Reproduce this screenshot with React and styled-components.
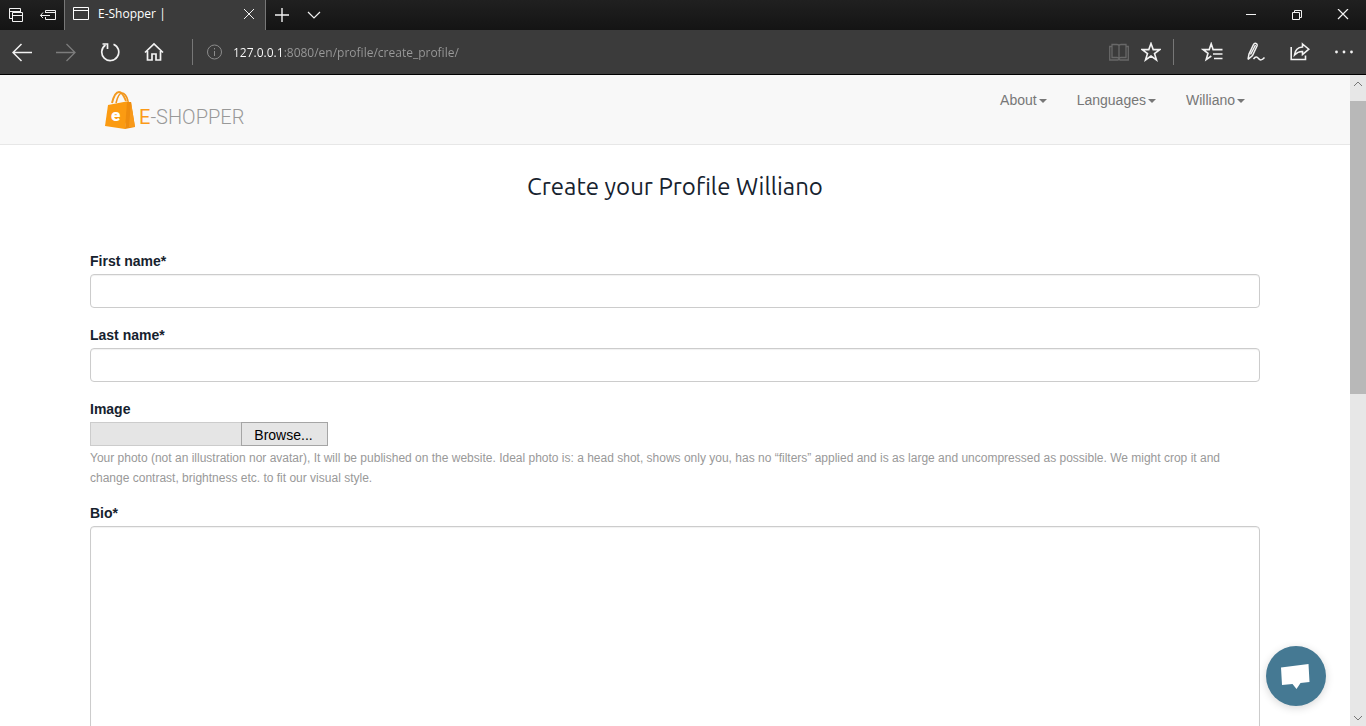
import React, { useRef, useState } from "react";
import styled, { createGlobalStyle } from "styled-components";

const GlobalStyle = createGlobalStyle`
  *, *::before, *::after { box-sizing: border-box; }
  body {
    margin: 0;
    background: #fff;
    color: #16222e;
    font: 14px/20px "Liberation Sans", Arial, sans-serif;
  }
`;

const Window = styled.div`
  display: flex;
  flex-direction: column;
  height: 100vh;
  overflow: hidden;
`;

const TabStrip = styled.div`
  display: flex;
  flex: 0 0 30px;
  background: linear-gradient(#202020, #141414);
  color: #fff;
  font-family: "Open Sans", "Noto Sans", sans-serif;
`;

const IconButton = styled.button`
  display: flex;
  align-items: center;
  justify-content: center;
  flex: none;
  width: ${(p) => p.$width || 32}px;
  padding: 0;
  border: 0;
  background: none;
  color: ${(p) => p.$color || "#f2f2f2"};
  svg {
    display: block;
    fill: none;
    stroke: currentColor;
  }
`;

const Tab = styled.div`
  display: flex;
  align-items: center;
  flex: 0 0 202px;
  padding: 0 0 2px 8px;
  border: solid #777;
  border-width: 0 1px;
  background: #3b3b3b;
  svg { flex: none; }
`;

const TabTitle = styled.span`
  flex: 1;
  padding-left: 8px;
  font-size: 12px;
  white-space: nowrap;
`;

const Spacer = styled.div`
  flex: 1;
`;

const Toolbar = styled.div`
  display: flex;
  flex: 0 0 45px;
  background: #3b3b3b;
  border-bottom: 1px solid #000;
`;

const Divider = styled.div`
  flex: 0 0 1px;
  height: 26px;
  margin: 9px ${(p) => p.$right || 0}px 0 ${(p) => p.$left || 0}px;
  background: #777;
`;

const Address = styled.input`
  flex: 1;
  min-width: 0;
  padding: 0 0 0 2px;
  border: 0;
  outline: 0;
  background: linear-gradient(90deg, #fff 53px, #9a9a9a 53px);
  background-clip: text;
  -webkit-background-clip: text;
  color: transparent;
  caret-color: #fff;
  font: 12px "Open Sans", "Noto Sans", sans-serif;
`;

const Viewport = styled.div`
  display: flex;
  flex: 1;
  min-height: 0;
`;

const Page = styled.div`
  flex: 1;
  min-width: 0;
  overflow-y: auto;
  scrollbar-width: none;
`;

const SiteHeader = styled.header`
  background: #f8f8f8;
  border-bottom: 1px solid #e7e7e7;
`;

const Container = styled.div`
  max-width: 1170px;
  margin: 0 auto;
`;

const HeaderRow = styled(Container)`
  display: flex;
  justify-content: space-between;
  min-height: 69px;
  padding: 16px 15px 0;
`;

const Logo = styled.a`
  display: flex;
  align-items: flex-start;
  color: #b3b3b3;
  text-decoration: none;
`;

const LogoText = styled.span`
  padding: 13px 0 0 3px;
  font: 300 20px/26px "Roboto", sans-serif;
  color: #999;
  b {
    font-weight: 400;
    color: #fb9a18;
  }
`;

const Nav = styled.nav`
  display: flex;
  align-items: flex-start;
  gap: 30px;
`;

const NavButton = styled.button`
  display: flex;
  align-items: center;
  padding: 0;
  border: 0;
  background: none;
  color: #777;
  font: 14px/18px "Liberation Sans", Arial, sans-serif;
  &::after {
    content: "";
    margin: 2px 0 0 2px;
    border: solid transparent;
    border-width: 4px 4px 0;
    border-top-color: #777;
  }
`;

const Main = styled(Container).attrs({ as: "main" })`
  padding: 30px 0 40px;
`;

const Title = styled.h1`
  margin: 0 0 52px;
  font: 400 24px/24px "Ubuntu", "Noto Sans", sans-serif;
  text-align: center;
`;

const Field = styled.div`
  margin-bottom: ${(p) => p.$gap || 17}px;
`;

const Label = styled.label`
  display: block;
  margin-bottom: 3px;
  font-size: 14px;
  font-weight: 700;
`;

const controlStyle = `
  display: block;
  width: 100%;
  padding: 6px 12px;
  border: 1px solid #ccc;
  border-radius: 4px;
  background: #fff;
  color: #555;
  font: inherit;
  box-shadow: inset 0 1px 1px rgba(0, 0, 0, 0.06);
`;

const TextInput = styled.input`
  ${controlStyle}
  height: 34px;
`;

const TextArea = styled.textarea`
  ${controlStyle}
  height: 320px;
  resize: vertical;
`;

const FilePicker = styled.div`
  display: flex;
  width: 238px;
  height: 24px;
`;

const HiddenFile = styled.input`
  position: absolute;
  width: 1px;
  height: 1px;
  opacity: 0;
`;

const FileName = styled.span`
  flex: 1;
  overflow: hidden;
  border: 1px solid #ccc;
  border-right: 0;
  background: #e5e5e5;
  font-size: 13px;
  white-space: nowrap;
`;

const Browse = styled.button`
  width: 87px;
  padding: 2px 2px 0 0;
  border: 1px solid #a5a5a5;
  background: #e5e5e5;
  color: #000;
  font: 14px/20px "Liberation Sans", Arial, sans-serif;
`;

const Help = styled.p`
  margin: 2px 0 0;
  color: #999;
  font-size: 12px;
`;

const ScrollTrack = styled.div`
  display: flex;
  flex-direction: column;
  flex: 0 0 16px;
  background: #e7e7e7;
`;

const ScrollButton = styled(IconButton)`
  width: 16px;
  height: 17px;
  color: #777;
`;

const Thumb = styled.div`
  height: 45%;
  margin-top: 9px;
  background: #b8b8b8;
`;

const ChatButton = styled.button`
  position: fixed;
  right: 40px;
  bottom: 20px;
  width: 60px;
  height: 60px;
  padding: 0;
  border: 0;
  border-radius: 50%;
  background: #457993;
  box-shadow: 0 2px 8px rgba(0, 0, 0, 0.16);
  svg { display: block; }
`;

function Icon({ w = 20, h = 20, sw = 1, children }) {
  return (
    <svg width={w} height={h} viewBox={`0 0 ${w} ${h}`} fill="none" stroke="currentColor" strokeWidth={sw} aria-hidden="true">
      {children}
    </svg>
  );
}

function Bag() {
  return (
    <svg width="31" height="39" viewBox="0 0 31 39" aria-hidden="true">
      <path d="M7 12C9 4 11 1 14 1s5 4 7 9" fill="none" stroke="#f39a20" strokeWidth="2" />
      <path d="M11 12C13 4 15 2 17 2s5 3 6 8" fill="none" stroke="#f0951e" strokeWidth="1.6" />
      <path d="M3 14 24 10 20 38 0 35Z" fill="#fb9b12" />
      <path d="M22 11 26 11 30 36 20 38Z" fill="#ee8c0e" />
      <path d="M26 11 30 36 24 36Z" fill="#f8991a" />
      <text x="6" y="30" fill="#fff" fontFamily="Roboto, sans-serif" fontSize="17" fontWeight="900">e</text>
    </svg>
  );
}

function FileField() {
  const input = useRef(null);
  const [name, setName] = useState("");
  return (
    <FilePicker>
      <HiddenFile
        ref={input}
        id="image"
        type="file"
        tabIndex={-1}
        onChange={(e) => setName(e.target.files[0] ? e.target.files[0].name : "")}
      />
      <FileName>{name}</FileName>
      <Browse type="button" onClick={() => input.current.click()}>Browse...</Browse>
    </FilePicker>
  );
}

const star = "M10 1.5 12.2 7.6H18.8L13.5 11.5 15.5 18 10 14.1 4.5 18 6.5 11.5 1.2 7.6H7.8Z";

export default function App() {
  return (
    <Window>
      <GlobalStyle />
      <TabStrip>
        <IconButton aria-label="Tabs set aside">
          <Icon w={16} h={16}>
            <path d="M4 11.5H1.5V1.5H12.5V5.5M1.5 4.5H12.5M4.5 5.5H14.5V14.5H4.5ZM4.5 8.5H14.5" />
          </Icon>
        </IconButton>
        <IconButton aria-label="Set tabs aside">
          <Icon w={16} h={16}>
            <path d="M5.5 6V3.5H15.5V12.5H5.5V10M5.5 5.5H15.5M0.5 8.5H10M3 5.5 0.5 8.5 3 11" />
          </Icon>
        </IconButton>
        <Tab>
          <Icon w={17} h={14}>
            <path d="M0.5 0.5H15.5V12.5H0.5ZM0.5 3.5H15.5" />
          </Icon>
          <TabTitle>E-Shopper |</TabTitle>
          <IconButton aria-label="Close tab">
            <Icon w={12} h={12}><path d="M1 1 11 11M11 1 1 11" /></Icon>
          </IconButton>
        </Tab>
        <IconButton aria-label="New tab">
          <Icon w={14} h={14}><path d="M0 7H14M7 0V14" strokeWidth="1.4" /></Icon>
        </IconButton>
        <IconButton aria-label="Show tab previews">
          <Icon w={14} h={8}><path d="M1 1 7 7 13 1" strokeWidth="1.2" /></Icon>
        </IconButton>
        <Spacer />
        <IconButton $width={46} aria-label="Minimize">
          <Icon w={11} h={11}><path d="M0 4.5H10" /></Icon>
        </IconButton>
        <IconButton $width={46} aria-label="Restore">
          <Icon w={11} h={11}><path d="M0.5 2.5H7.5V9.5H0.5ZM2.5 2.5V0.5H9.5V7.5H7.5" /></Icon>
        </IconButton>
        <IconButton $width={46} aria-label="Close">
          <Icon w={12} h={12}><path d="M1 0 11 10M11 0 1 10" strokeWidth="1.2" /></Icon>
        </IconButton>
      </TabStrip>

      <Toolbar>
        <IconButton $width={44} aria-label="Back">
          <Icon><path d="M20 10.5H1M9.5 2 1 10.5 9.5 19" strokeWidth="1.5" /></Icon>
        </IconButton>
        <IconButton $width={44} $color="#7c7c7c" aria-label="Forward">
          <Icon><path d="M0 10.5H19M10.5 2 19 10.5 10.5 19" strokeWidth="1.3" /></Icon>
        </IconButton>
        <IconButton $width={44} aria-label="Refresh">
          <Icon>
            <path d="M13.5 2.2A8.5 8.5 0 1 1 5.5 3" strokeWidth="1.7" />
            <path d="M2.5 2H7.5V7" strokeWidth="1.7" />
          </Icon>
        </IconButton>
        <IconButton $width={44} aria-label="Home">
          <Icon><path d="M1 10.5 10 2 19 10.5M3.5 9V18H8V12H12V18H16.5V9" strokeWidth="1.7" /></Icon>
        </IconButton>
        <Divider $left={16} $right={6} />
        <IconButton $color="#8c8c8c" aria-label="Site information">
          <Icon w={16} h={16}>
            <circle cx="7.5" cy="8" r="7" />
            <path d="M7.5 7V12M7.5 4V5.4" />
          </Icon>
        </IconButton>
        <Address aria-label="Address" defaultValue="127.0.0.1:8080/en/profile/create_profile/" />
        <IconButton $color="#686868" aria-label="Reading view">
          <Icon>
            <path d="M3 2.5H8C9.5 2.5 10 3.3 10 4 10 3.3 10.5 2.5 12 2.5H17V15.5H12C10.5 15.5 10 16.5 10 17 10 16.5 9.5 15.5 8 15.5H3ZM10 4V17M3 4.5H.7V18H9L10 17 11 18H19.3V4.5H17" strokeWidth="1.3" />
          </Icon>
        </IconButton>
        <IconButton aria-label="Add to favorites">
          <Icon><path d={star} strokeWidth="1.6" /></Icon>
        </IconButton>
        <Divider $left={6} $right={16} />
        <IconButton $width={44} aria-label="Favorites hub">
          <Icon w={22}>
            <path d="M14 7.6H12.1L10.2 1.8 8.2 7.6H2.2L7 11.3 5.2 17.6 10.3 14M12.5 7.6H21.5M12 12H21.5M13 16.5H21.5" strokeWidth="1.6" />
          </Icon>
        </IconButton>
        <IconButton $width={44} aria-label="Add notes">
          <Icon>
            <path d="M2 17.5 3 12 7.5 2.5C8.5 .6 12 1.2 11 4L6.5 13.5 2 17.5M4.5 12.5 9.5 3M7.5 17C9.5 14.5 11 14.5 12.5 16.5S16 18.5 18.5 15.5" strokeWidth="1.5" />
          </Icon>
        </IconButton>
        <IconButton $width={44} aria-label="Share">
          <Icon>
            <path d="M1.2 5V17.5H15.5V13.5M12.5 2 18.8 7.2 12.5 12.5V9.5C9 9.2 7 10.5 4.5 13 5 8.5 7.5 5.3 12.5 5Z" strokeWidth="1.6" />
          </Icon>
        </IconButton>
        <IconButton $width={44} aria-label="Settings and more">
          <Icon>
            <g fill="currentColor" stroke="none">
              <circle cx="2.5" cy="10" r="1.4" /><circle cx="10" cy="10" r="1.4" /><circle cx="17.5" cy="10" r="1.4" />
            </g>
          </Icon>
        </IconButton>
      </Toolbar>

      <Viewport>
        <Page>
          <SiteHeader>
            <HeaderRow>
              <Logo href="#" aria-label="E-Shopper home">
                <Bag />
                <LogoText><b>E</b>-SHOPPER</LogoText>
              </Logo>
              <Nav>
                <NavButton>About</NavButton>
                <NavButton>Languages</NavButton>
                <NavButton>Williano</NavButton>
              </Nav>
            </HeaderRow>
          </SiteHeader>
          <Main>
            <Title>Create your Profile Williano</Title>
            <form>
              <Field>
                <Label htmlFor="first">First name*</Label>
                <TextInput id="first" type="text" />
              </Field>
              <Field>
                <Label htmlFor="last">Last name*</Label>
                <TextInput id="last" type="text" />
              </Field>
              <Field $gap={15}>
                <Label htmlFor="image">Image</Label>
                <FileField />
                <Help>
                  Your photo (not an illustration nor avatar), It will be published on the website. Ideal photo is: a
                  head shot, shows only you, has no “filters” applied and is as large and uncompressed as possible. We
                  might crop it and change contrast, brightness etc. to fit our visual style.
                </Help>
              </Field>
              <Field>
                <Label htmlFor="bio">Bio*</Label>
                <TextArea id="bio" />
              </Field>
            </form>
          </Main>
        </Page>
        <ScrollTrack>
          <ScrollButton aria-label="Scroll up">
            <Icon w={10} h={6}><path d="M1 5 5 1 9 5" /></Icon>
          </ScrollButton>
          <Thumb />
          <Spacer />
          <ScrollButton aria-label="Scroll down">
            <Icon w={10} h={6}><path d="M1 1 5 5 9 1" /></Icon>
          </ScrollButton>
        </ScrollTrack>
      </Viewport>

      <ChatButton aria-label="Open chat">
        <svg width="60" height="60" viewBox="0 0 60 60" aria-hidden="true">
          <path d="M15 21.5 42.5 18 43.5 36 34.5 37 30.5 43 26.5 38 16 39Z" fill="#fff" />
        </svg>
      </ChatButton>
    </Window>
  );
}
